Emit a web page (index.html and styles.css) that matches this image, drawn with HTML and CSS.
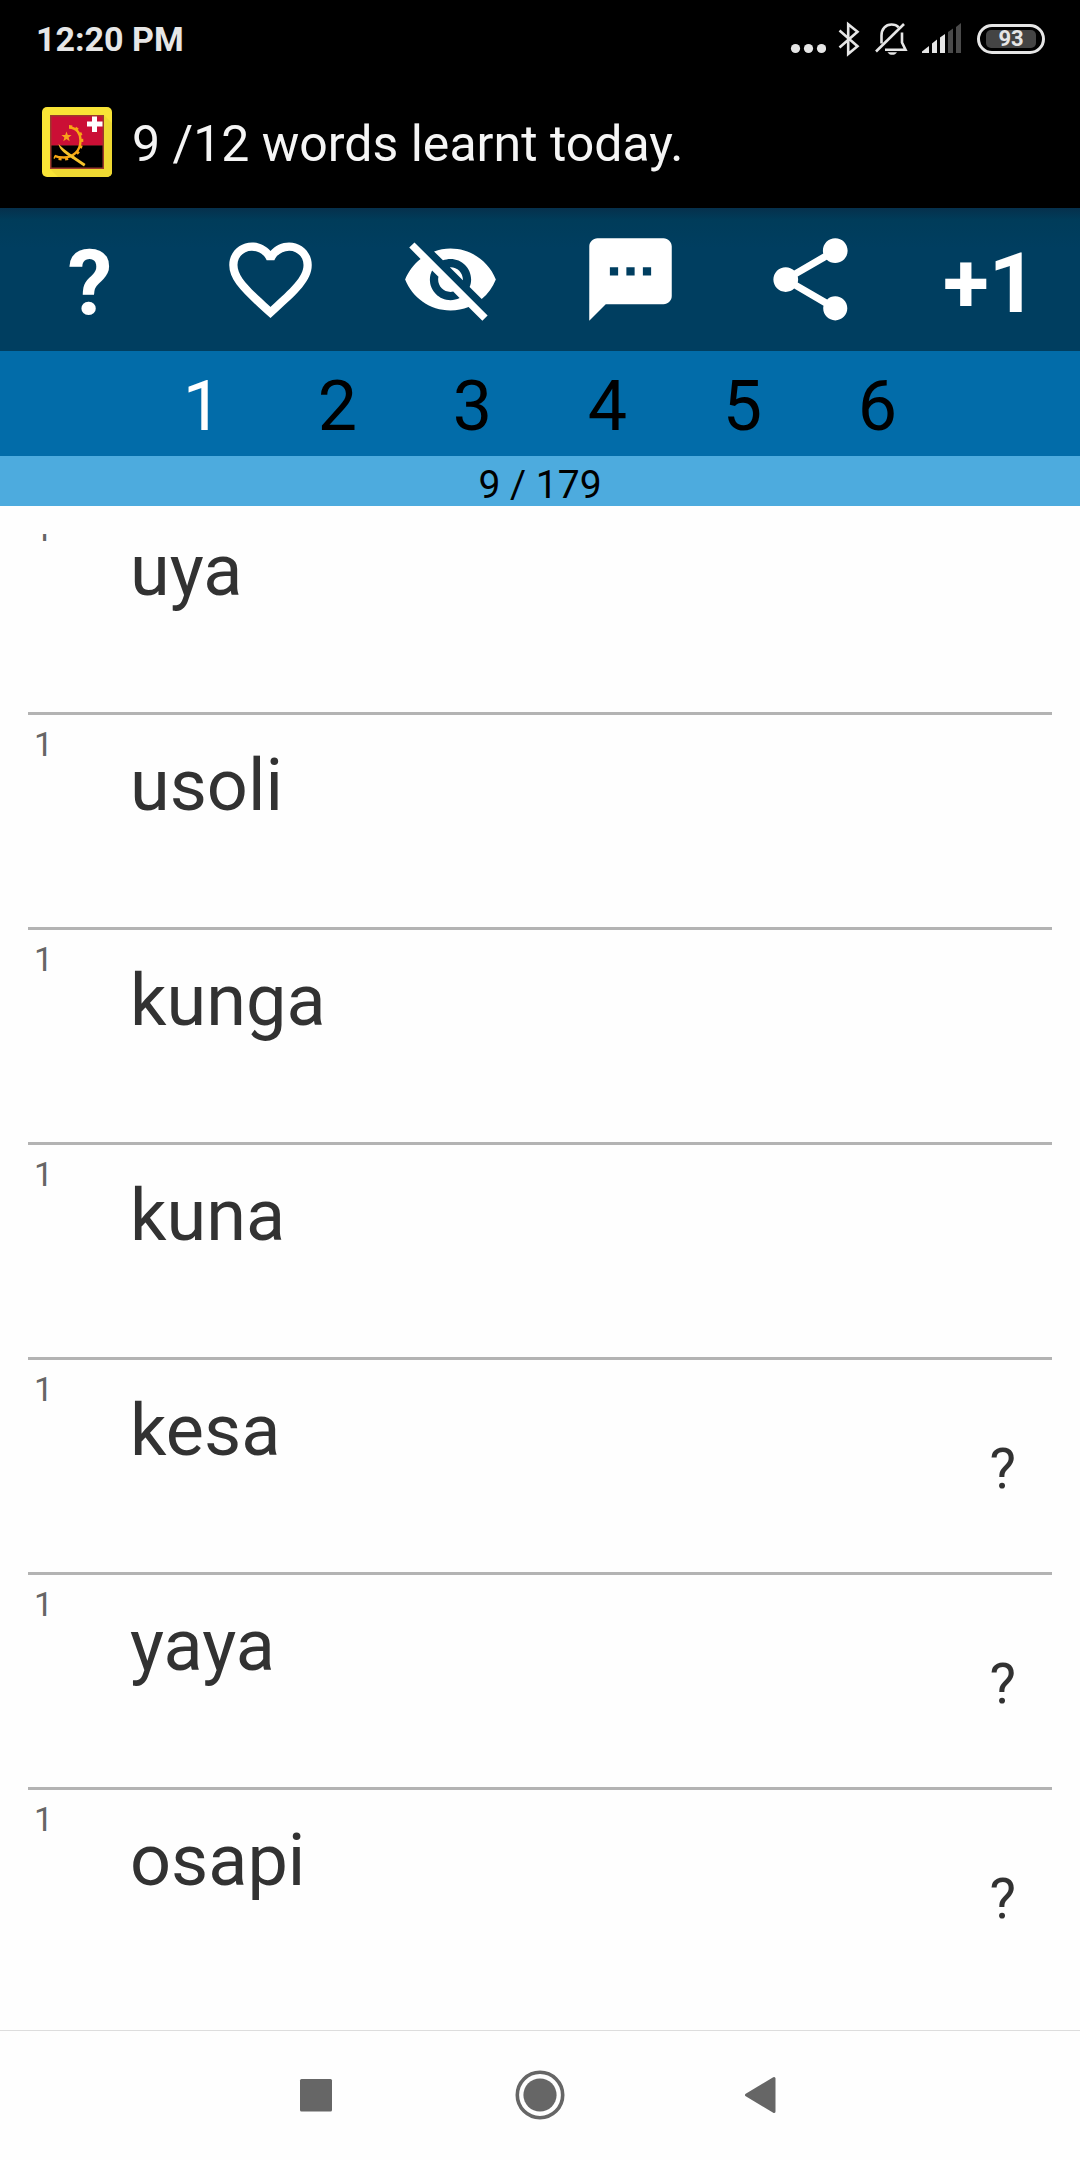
FILE: index.html
```html
<!DOCTYPE html>
<html lang="en">
<head>
    <meta charset="UTF-8">
    <meta name="viewport" content="width=device-width, initial-scale=1.0">
    <title>Words learnt today</title>
    <link rel="stylesheet" href="styles.css">
</head>
<body>

    <div class="status-bar">
        <span class="clock">12:20 PM</span>
        <div class="status-icons">
            <svg width="36" height="40" viewBox="0 0 36 40" fill="#e6e6e6">
                <circle cx="5.5" cy="29.5" r="4.6" />
                <circle cx="18.5" cy="29.5" r="4.6" />
                <circle cx="31.5" cy="29.5" r="4.6" />
            </svg>
            <svg width="24" height="40" viewBox="0 0 24 40" fill="none" stroke="#e6e6e6" stroke-width="2.6">
                <path d="M1.5 11.5L19.5 27.2L10.2 35V5.2L19.5 12.8L1.5 28.5" />
            </svg>
            <svg width="36" height="40" viewBox="0 0 36 40" fill="none" stroke="#e6e6e6" stroke-width="2.6">
                <path d="M7.5 24.5V16.5C7.5 10 11.5 5.5 17.5 5.5C20.5 5.5 23 6.5 24.7 8.3" />
                <path d="M28 13.5V23.5L31.5 30.8H11" />
                <path d="M2 32.5L30 5" />
                <path d="M13.5 33.2h9.5c-1 1.6-2.6 2.6-4.7 2.6s-3.800-1-4.800-2.600z" fill="#e6e6e6" stroke="none" />
            </svg>
            <svg width="40" height="40" viewBox="0 0 40 40" fill="#e6e6e6">
                <path d="M0 32.5L7 27V34H0z" />
                <path d="M10 24.5L15 20.5V34H10z" />
                <path d="M18 18.5L23 15V34H18z" />
                <path d="M26 13L31 9.5V34H26z" fill="#4a4a4a" />
                <path d="M34 8L39 4V34H34z" fill="#4a4a4a" />
            </svg>
            <div class="battery"><span class="battery-level">93</span></div>
        </div>
    </div>

    <header class="title-bar">
        <svg class="app-icon" viewBox="0 0 70 70">
            <rect width="70" height="70" rx="5" fill="#f9e436" />
            <path d="M62 8L70 16V65a5 5 0 0 1-5 5H16L8 62z" fill="#efd932" />
            <rect x="8" y="8" width="54" height="54" fill="#9c3a2c" />
            <rect x="9.5" y="9.5" width="51" height="29" fill="#cb0f35" />
            <rect x="9.5" y="38.5" width="51" height="22" fill="#000" />
            <path d="M27 20.5C35 20.5 38.5 27 38.5 33.500C38.500 44 31 50.500 22 50.500C18.500 50.500 15 50 12.500 48.800" fill="none" stroke="#f6a714" stroke-width="2.4" />
            <path d="M27 19.5C36 19.5 39.8 27 39.8 33.500C39.800 45 31 52 22 52C18.500 52 15 51.500 12 50" fill="none" stroke="#f6a714" stroke-width="3" stroke-dasharray="3 3.5" />
            <path d="M24.500 24.500l1.300 3.600h3.800l-3 2.400 1.100 3.800-3.200-2.200-3.200 2.200 1.100-3.800-3-2.400h3.800z" fill="#f9a11b" />
            <path d="M16.500 37C20 40.500 24 43.500 28 46.500L43.500 57L42 59.500L25 48C21 45 17.500 42 16.500 37z" fill="#f4c22b" />
            <path d="M50 9.500h5v5h5.500v5H55v5.500h-5V19.500h-5v-5h5z" fill="#fff" />
        </svg>
        <h1>9 /12 words learnt today.</h1>
    </header>

    <nav class="toolbar">
        <button class="help" aria-label="Help">?</button>
        <button aria-label="Favourite">
            <svg class="icon" viewBox="0 0 24 24"><path d="M16.5 3c-1.74 0-3.41.81-4.5 2.09C10.91 3.81 9.24 3 7.5 3 4.42 3 2 5.42 2 8.5c0 3.78 3.4 6.86 8.55 11.54L12 21.35l1.45-1.32C18.6 15.36 22 12.28 22 8.5 22 5.42 19.58 3 16.5 3zm-4.4 15.55l-.1.1-.1-.1C7.14 14.24 4 11.39 4 8.5 4 6.5 5.5 5 7.5 5c1.54 0 3.04.99 3.57 2.36h1.87C13.46 5.99 14.96 5 16.5 5c2 0 3.5 1.5 3.5 3.5 0 2.89-3.14 5.74-7.9 10.05z" /></svg>
        </button>
        <button aria-label="Hide translation">
            <svg class="icon" viewBox="0 0 24 24"><path d="M12 7c2.76 0 5 2.24 5 5 0 .65-.13 1.26-.36 1.83l2.92 2.92c1.51-1.26 2.7-2.89 3.43-4.75-1.73-4.39-6-7.5-11-7.5-1.4 0-2.74.25-3.98.7l2.16 2.16C10.74 7.13 11.35 7 12 7zM2 4.27l2.28 2.28.46.46C3.08 8.3 1.78 10.02 1 12c1.73 4.39 6 7.5 11 7.5 1.55 0 3.03-.3 4.38-.84l.42.42L19.73 22 21 20.73 3.27 3 2 4.27zM7.53 9.8l1.55 1.55c-.05.21-.08.43-.08.65 0 1.66 1.34 3 3 3 .22 0 .44-.03.65-.08l1.55 1.55c-.67.33-1.41.53-2.2.53-2.76 0-5-2.24-5-5 0-.79.2-1.53.53-2.2zm4.31-.78l3.15 3.15.02-.16c0-1.66-1.34-3-3-3l-.17.01z" /></svg>
        </button>
        <button aria-label="Comment">
            <svg class="icon" viewBox="0 0 24 24"><path d="M20 2H4c-1.1 0-1.99.9-1.99 2L2 22l4-4h14c1.1 0 2-.9 2-2V4c0-1.1-.9-2-2-2zM9 11H7V9h2v2zm4 0h-2V9h2v2zm4 0h-2V9h2v2z" /></svg>
        </button>
        <button aria-label="Share">
            <svg class="icon" viewBox="0 0 24 24"><path d="M18 16.08c-.76 0-1.44.3-1.96.77L8.91 12.7c.05-.23.09-.46.09-.7s-.04-.47-.09-.7l7.05-4.11c.54.5 1.25.81 2.04.81 1.66 0 3-1.34 3-3s-1.34-3-3-3-3 1.34-3 3c0 .24.04.47.09.7L8.04 9.81C7.5 9.31 6.79 9 6 9c-1.66 0-3 1.34-3 3s1.34 3 3 3c.79 0 1.5-.31 2.04-.81l7.12 4.16c-.05.21-.08.43-.08.65 0 1.61 1.31 2.92 2.92 2.92 1.61 0 2.92-1.31 2.92-2.92s-1.31-2.92-2.92-2.92z" /></svg>
        </button>
        <button class="plus-one" aria-label="One more word">+1</button>
    </nav>

    <nav class="levels">
        <button class="active">1</button>
        <button>2</button>
        <button>3</button>
        <button>4</button>
        <button>5</button>
        <button>6</button>
    </nav>

    <div class="progress">9 / 179</div>

    <main class="content">
        <div class="scroller">
            <ul class="word-list">
                <li><span class="level">1</span><span class="word">uya</span></li>
                <li><span class="level">1</span><span class="word">usoli</span></li>
                <li><span class="level">1</span><span class="word">kunga</span></li>
                <li><span class="level">1</span><span class="word">kuna</span></li>
                <li><span class="level">1</span><span class="word">kesa</span><button class="reveal">?</button></li>
                <li><span class="level">1</span><span class="word">yaya</span><button class="reveal">?</button></li>
                <li><span class="level">1</span><span class="word">osapi</span><button class="reveal">?</button></li>
            </ul>
        </div>
    </main>

    <footer class="nav-bar">
        <button aria-label="Recent apps">
            <svg width="50" height="50" viewBox="0 0 50 50"><rect x="8" y="9" width="32" height="32.500" rx="1.500" /></svg>
        </button>
        <button aria-label="Home">
            <svg width="50" height="50" viewBox="0 0 50 50">
                <circle cx="25" cy="25" r="16.600" />
                <circle cx="25" cy="25" r="22.700" fill="none" stroke="#666" stroke-width="3.600" />
            </svg>
        </button>
        <button aria-label="Back">
            <svg width="50" height="50" viewBox="0 0 50 50"><path d="M8.500 25L36 8.500V41.500z" stroke="#666" stroke-width="3" stroke-linejoin="round" /></svg>
        </button>
    </footer>

</body>
</html>
```

FILE: styles.css
```css
* {
    box-sizing: border-box;
}

body {
    font-family: Roboto, sans-serif;
    background-color: #fefefe;
    margin: 0;
    display: flex;
    flex-direction: column;
    height: 100vh;
}

button {
    font: inherit;
    color: inherit;
    background: none;
    border: none;
    padding: 0;
    cursor: pointer;
}

svg {
    display: block;
}

/* Status bar */
.status-bar {
    display: flex;
    justify-content: space-between;
    align-items: center;
    height: 76px;
    padding: 2px 35px 0 36px;
    background-color: #000;
    color: #e6e6e6;
}

.clock {
    font-size: 34px;
    font-weight: bold;
}

.status-icons {
    display: flex;
    align-items: center;
    gap: 12px;
}

.battery {
    width: 68px;
    height: 30px;
    margin-left: 3px;
    padding: 3px 6px;
    border: 3px solid #e6e6e6;
    border-radius: 15px;
}

.battery-level {
    display: block;
    height: 18px;
    border-radius: 5px;
    background-color: #444;
    font-size: 22px;
    font-weight: bold;
    line-height: 18px;
    text-align: center;
}

/* Title */
.title-bar {
    display: flex;
    align-items: center;
    gap: 20px;
    height: 132px;
    padding: 0 42px;
    background-color: #000;
    color: #f5f5f5;
}

.app-icon {
    width: 70px;
    height: 70px;
}

h1 {
    margin: 0;
    padding-top: 4px;
    font-size: 50px;
    font-weight: normal;
}

/* Action toolbar */
.toolbar {
    display: grid;
    grid-template-columns: repeat(6, 1fr);
    height: 143px;
    background: linear-gradient(#06304c, #003c5a 12px, #003e60 40px);
    color: #fff;
}

.toolbar button {
    display: flex;
    justify-content: center;
    align-items: center;
    font-weight: bold;
}

.toolbar .help,
.toolbar .plus-one {
    padding-top: 8px;
}

.toolbar .help {
    font-size: 90px;
}

.toolbar .plus-one {
    font-size: 84px;
}

.icon {
    width: 99px;
    height: 99px;
    fill: #fff;
}

/* Level tabs */
.levels {
    display: grid;
    grid-template-columns: repeat(6, 1fr);
    height: 105px;
    padding: 4px 12.5% 0;
    background-color: #026ca9;
    color: #000;
    font-size: 70px;
}

.levels .active {
    color: #fff;
}

.progress {
    height: 50px;
    padding-top: 6px;
    background-color: #4dabde;
    color: #000;
    font-size: 39px;
    line-height: 46px;
    text-align: center;
}

/* Word list */
.content {
    flex: 1;
    min-height: 0;
    padding: 28px;
}

.scroller {
    height: 100%;
    overflow: hidden;
}

/* list is scrolled a little past its first row */
.word-list {
    list-style: none;
    margin: -34px 0 0;
    padding: 0;
}

.word-list li {
    display: grid;
    grid-template-columns: 96px 1fr auto;
    align-items: start;
    height: 215px;
    padding: 0 36px 0 6px;
    border-bottom: 3px solid #b3b3b3;
    color: #323232;
}

.level {
    padding-top: 9px;
    color: #666;
    font-size: 34px;
}

.word {
    padding-top: 28px;
    font-size: 72px;
}

.reveal {
    padding-top: 76px;
    font-size: 56px;
}

/* Android navigation */
.nav-bar {
    display: grid;
    grid-template-columns: repeat(3, 1fr);
    height: 130px;
    padding: 0 19% 2px;
    border-top: 1px solid #ddd;
    fill: #666;
}

.nav-bar button {
    display: flex;
    justify-content: center;
    align-items: center;
}
```
